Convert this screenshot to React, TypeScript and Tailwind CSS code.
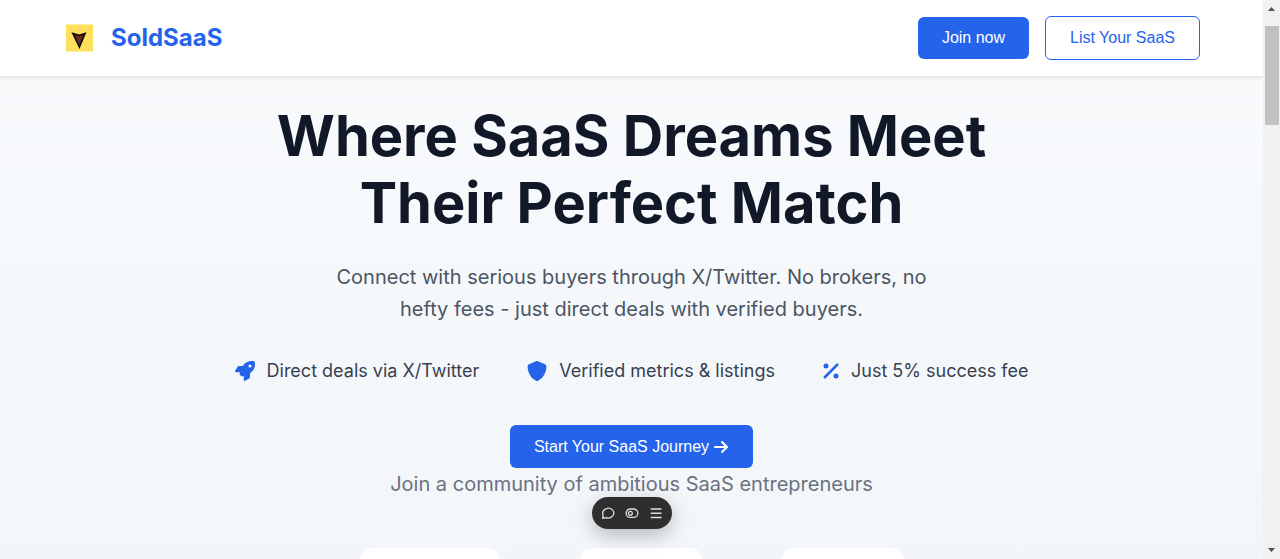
import type { ReactNode } from "react";
import { FaArrowRight, FaPercent, FaRocket, FaShield } from "react-icons/fa6";

function Logo() {
  return (
    <svg className="h-7 w-7" viewBox="0 0 28 28" aria-hidden="true">
      <rect x="1" y="0.500" width="27" height="27" fill="#ffe05a" />
      <path
        d="M8 9.500l6.200 1.800 5.800-1.800-5.600 13.500z"
        fill="#6b2a20"
        stroke="#140c08"
        strokeWidth="1.700"
        strokeLinejoin="miter"
      />
    </svg>
  );
}

function Header() {
  return (
    <header className="relative flex h-19 shrink-0 items-center justify-between bg-white pr-[63px] pl-16 shadow-[0_2px_4px_rgba(0,0,0,0.1)]">
      <a href="#home" className="flex items-center gap-[18px] pl-px text-2xl font-bold text-[#2563eb]">
        <Logo />
        SoldSaaS
      </a>
      <nav className="flex items-center gap-4 font-['Liberation_Sans',Arial,sans-serif] text-base leading-[18px]">
        <button className="rounded-md bg-[#2563eb] px-6 py-3 text-white">Join now</button>
        <button className="rounded-md border border-[#2563eb] bg-white px-6 py-3 text-[#2563eb]">
          List Your SaaS
        </button>
      </nav>
    </header>
  );
}

function Feature({ icon, children }: { icon: ReactNode; children: ReactNode }) {
  return (
    <li className="flex items-center gap-3">
      <span className="text-xl text-[#2563eb]">{icon}</span>
      {children}
    </li>
  );
}

function Hero() {
  return (
    <main className="flex flex-1 flex-col items-center bg-linear-to-b from-[#f8fafc] to-[#f1f5f9] px-16 pt-[27px] text-center">
      <h1 className="max-w-[800px] text-[56px] leading-[67px] font-bold text-[#111827]">
        Where SaaS Dreams Meet Their Perfect Match
      </h1>
      <p className="mt-6 max-w-[600px] text-xl leading-8 text-[#4b5563]">
        Connect with serious buyers through X/Twitter. No brokers, no hefty fees - just direct deals
        with verified buyers.
      </p>
      <ul className="mt-8 flex items-center gap-12 text-lg leading-7 text-[#374151]">
        <Feature icon={<FaRocket />}>Direct deals via X/Twitter</Feature>
        <Feature icon={<FaShield />}>Verified metrics &amp; listings</Feature>
        <Feature icon={<FaPercent className="h-5 w-4" />}>Just 5% success fee</Feature>
      </ul>
      <button className="mt-10 flex items-center gap-1 rounded-md bg-[#2563eb] px-6 py-3 font-['Liberation_Sans',Arial,sans-serif] text-base leading-[19px] text-white">
        Start Your SaaS Journey <FaArrowRight />
      </button>
      <p className="text-xl leading-8 text-[#6b7280]">
        Join a community of ambitious SaaS entrepreneurs
      </p>
      <div className="mt-12 flex gap-20">
        <div className="h-28 w-[140px] rounded-xl bg-white" />
        <div className="h-28 w-[122px] rounded-xl bg-white" />
        <div className="h-28 w-[122px] rounded-xl bg-white" />
      </div>
    </main>
  );
}

function Toolbar() {
  return (
    <div className="absolute bottom-[30px] left-1/2 flex h-8 -translate-x-1/2 items-center gap-2 rounded-full bg-[#2e2e2e] px-2 text-[#dedede] shadow-[0_6px_20px_rgba(0,0,0,0.25)]">
      <button aria-label="Comment">
        <svg className="h-4 w-4" viewBox="0 0 16 16" fill="none" stroke="currentColor" strokeWidth="1.300" strokeLinejoin="round">
          <path d="M2.600 13.400l.6-3.200A5.600 4.900 0 1 1 6 12.600z" />
        </svg>
      </button>
      <button aria-label="Toggle">
        <svg className="h-4 w-4" viewBox="0 0 16 16" fill="none" stroke="currentColor" strokeWidth="1.300">
          <rect x="2.200" y="4" width="11.600" height="8.400" rx="4.200" />
          <circle cx="6.400" cy="8.200" r="1.900" />
        </svg>
      </button>
      <button aria-label="Menu">
        <svg className="h-4 w-4" viewBox="0 0 16 16" fill="none" stroke="currentColor" strokeWidth="1.400">
          <path d="M2.700 4h10.800M2.700 8.300h10.800M2.700 12.500h10.800" />
        </svg>
      </button>
    </div>
  );
}

function Scrollbar() {
  return (
    <div className="flex w-[17px] shrink-0 flex-col items-center bg-[#f1f1f1]" aria-hidden="true">
      <svg className="h-[17px] w-[17px]" viewBox="0 0 17 17">
        <path d="M5 11l3.500-4 3.500 4z" fill="#505050" />
      </svg>
      <div className="mt-[9px] h-[99px] w-[14px] bg-[#c1c1c1]" />
      <svg className="mt-auto h-[17px] w-[17px]" viewBox="0 0 17 17">
        <path d="M5 6l3.500 4 3.500-4z" fill="#505050" />
      </svg>
    </div>
  );
}

export default function App() {
  return (
    <div className="flex h-screen overflow-hidden font-['Inter',sans-serif]">
      <div className="relative flex min-w-0 flex-1 flex-col overflow-hidden">
        <Header />
        <Hero />
        <Toolbar />
      </div>
      <Scrollbar />
    </div>
  );
}
